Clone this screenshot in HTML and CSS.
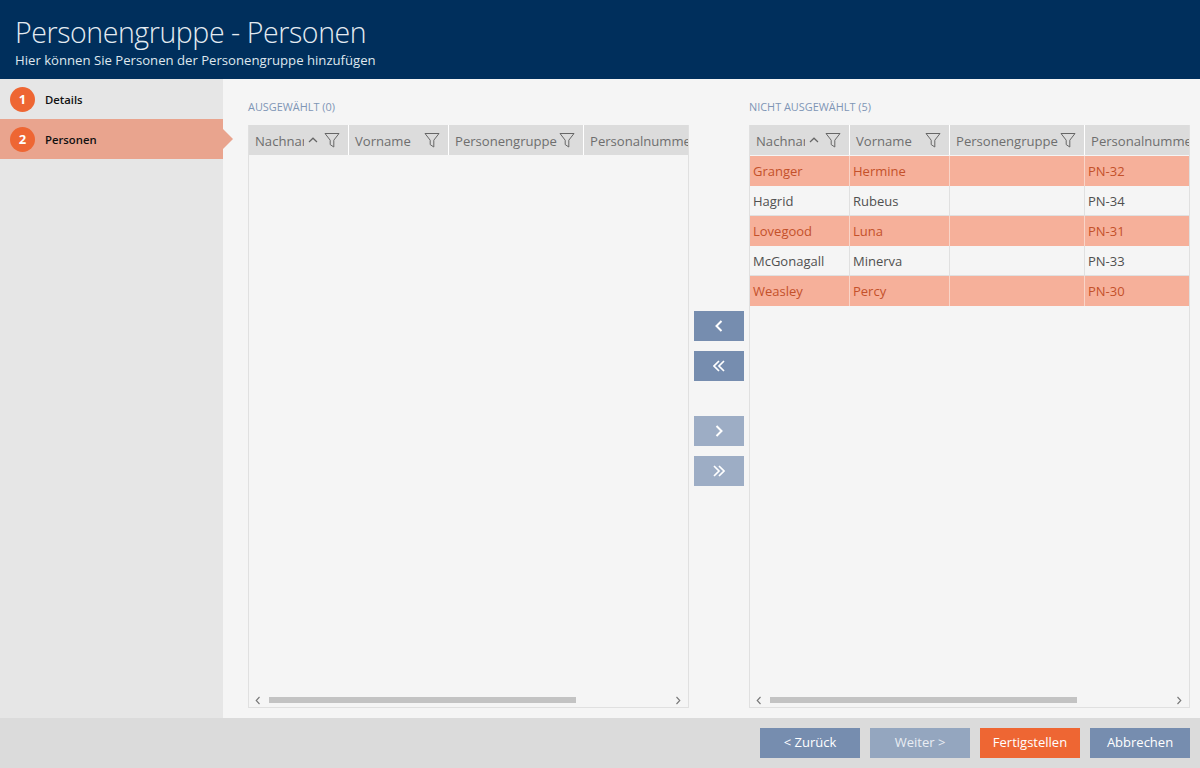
FILE: index.html
```html
<!DOCTYPE html>
<html lang="de">
<head>
<meta charset="utf-8">
<title>Personengruppe - Personen</title>
<link rel="stylesheet" href="styles.css">
</head>
<body>
<svg class="defs" width="0" height="0" aria-hidden="true">
  <symbol id="funnel" viewBox="0 0 16 16"><path d="M1 1.5h14L9.8 8.2V15L6.2 12.6V8.2Z" fill="none" stroke="currentColor" stroke-width="1"/></symbol>
  <symbol id="caret" viewBox="0 0 10 6"><path d="M1 5 5 1.2 9 5" fill="none" stroke="currentColor" stroke-width="1.2"/></symbol>
  <symbol id="left" viewBox="0 0 8 12"><path d="M6.5 1 1.5 6l5 5" fill="none" stroke="currentColor" stroke-width="2"/></symbol>
  <symbol id="right" viewBox="0 0 8 12"><path d="M1.5 1l5 5-5 5" fill="none" stroke="currentColor" stroke-width="2"/></symbol>
  <symbol id="dleft" viewBox="0 0 12 12"><path d="M6 1 1 6l5 5M11 1 6 6l5 5" fill="none" stroke="currentColor" stroke-width="1.7"/></symbol>
  <symbol id="dright" viewBox="0 0 12 12"><path d="M1 1l5 5-5 5M6 1l5 5-5 5" fill="none" stroke="currentColor" stroke-width="1.7"/></symbol>
  <symbol id="sl" viewBox="0 0 6 9"><path d="M4.5 1 1.2 4.5 4.5 8" fill="none" stroke="currentColor" stroke-width="1.1"/></symbol>
  <symbol id="sr" viewBox="0 0 6 9"><path d="M1.5 1l3.3 3.5L1.5 8" fill="none" stroke="currentColor" stroke-width="1.1"/></symbol>
</svg>
<div class="app">
  <header class="header">
    <h1 class="title">Personengruppe - Personen</h1>
    <p class="subtitle">Hier können Sie Personen der Personengruppe hinzufügen</p>
  </header>
  <div class="body">
    <nav class="sidebar">
      <div class="step"><span class="num">1</span><span class="step-label">Details</span></div>
      <div class="step active"><span class="num">2</span><span class="step-label">Personen</span></div>
    </nav>
    <main class="main">
      <section class="panel">
        <div class="panel-label">AUSGEWÄHLT (0)</div>
        <div class="table">
          <div class="thead">
            <div class="th c1"><span class="th-text narrow">Nachname</span><svg class="caret"><use href="#caret"/></svg><svg class="funnel"><use href="#funnel"/></svg></div>
            <div class="th c2"><span class="th-text">Vorname</span><svg class="funnel"><use href="#funnel"/></svg></div>
            <div class="th c3"><span class="th-text">Personengruppe</span><svg class="funnel"><use href="#funnel"/></svg></div>
            <div class="th c4"><span class="th-text">Personalnummer</span></div>
          </div>
          <div class="tbody"></div>
          <div class="scroll"><svg class="sc-arrow"><use href="#sl"/></svg><div class="track"><div class="thumb"></div></div><svg class="sc-arrow"><use href="#sr"/></svg></div>
        </div>
      </section>
      <div class="transfer">
        <button class="arrow"><svg class="ic1"><use href="#left"/></svg></button>
        <button class="arrow"><svg class="ic2"><use href="#dleft"/></svg></button>
        <button class="arrow dim sep"><svg class="ic1"><use href="#right"/></svg></button>
        <button class="arrow dim"><svg class="ic2"><use href="#dright"/></svg></button>
      </div>
      <section class="panel">
        <div class="panel-label">NICHT AUSGEWÄHLT (5)</div>
        <div class="table">
          <div class="thead">
            <div class="th c1"><span class="th-text narrow">Nachname</span><svg class="caret"><use href="#caret"/></svg><svg class="funnel"><use href="#funnel"/></svg></div>
            <div class="th c2"><span class="th-text">Vorname</span><svg class="funnel"><use href="#funnel"/></svg></div>
            <div class="th c3"><span class="th-text">Personengruppe</span><svg class="funnel"><use href="#funnel"/></svg></div>
            <div class="th c4"><span class="th-text">Personalnummer</span></div>
          </div>
          <div class="tbody">
            <div class="tr hot"><div class="td c1">Granger</div><div class="td c2">Hermine</div><div class="td c3"></div><div class="td c4">PN-32</div></div>
            <div class="tr"><div class="td c1">Hagrid</div><div class="td c2">Rubeus</div><div class="td c3"></div><div class="td c4">PN-34</div></div>
            <div class="tr hot"><div class="td c1">Lovegood</div><div class="td c2">Luna</div><div class="td c3"></div><div class="td c4">PN-31</div></div>
            <div class="tr"><div class="td c1">McGonagall</div><div class="td c2">Minerva</div><div class="td c3"></div><div class="td c4">PN-33</div></div>
            <div class="tr hot"><div class="td c1">Weasley</div><div class="td c2">Percy</div><div class="td c3"></div><div class="td c4">PN-30</div></div>
          </div>
          <div class="scroll"><svg class="sc-arrow"><use href="#sl"/></svg><div class="track"><div class="thumb"></div></div><svg class="sc-arrow"><use href="#sr"/></svg></div>
        </div>
      </section>
    </main>
  </div>
  <footer class="footer">
    <button class="btn">&lt; Zurück</button>
    <button class="btn dim">Weiter &gt;</button>
    <button class="btn primary">Fertigstellen</button>
    <button class="btn">Abbrechen</button>
  </footer>
</div>
</body>
</html>
```
FILE: styles.css
```css
* { box-sizing: border-box; }
html, body { margin: 0; padding: 0; }
body { font-family: "Open Sans", "Noto Sans", "Liberation Sans", sans-serif; font-size: 13px; color: #505050; }
.defs { display: block; height: 0; }
.app { width: 1200px; height: 768px; display: flex; flex-direction: column; overflow: hidden; background: #f5f5f5; }

.header { height: 79px; flex: none; background: #002f5c; color: #fff; padding: 13px 15px 0; }
.title { margin: 0; font-size: 28.5px; line-height: 38px; font-weight: 300; color: #e4ebf1; letter-spacing: -0.42px; }
.subtitle { margin: 0; font-size: 13.15px; line-height: 18px; color: #dfe7ee; }

.body { flex: 1; display: flex; min-height: 0; }
.sidebar { width: 223px; flex: none; background: #e6e6e6; }
.step { height: 40px; display: flex; align-items: center; padding-left: 10px; position: relative; }
.step.active { background: #e9a48e; }
.step.active::after { content: ""; position: absolute; left: 100%; top: 10px; border-left: 10px solid #e9a48e; border-top: 10px solid transparent; border-bottom: 10px solid transparent; }
.num { width: 25px; height: 25px; border-radius: 50%; background: #ee6633; color: #fff; font-weight: 700; font-size: 13px; display: flex; align-items: center; justify-content: center; }
.step-label { margin-left: 10px; font-size: 11.3px; font-weight: 600; color: #111; }

.main { flex: 1; display: flex; padding: 0 10px 10px 25px; min-width: 0; }
.panel { width: 441px; flex: none; display: flex; flex-direction: column; }
.panel-label { height: 46px; padding-top: 21px; font-size: 10.9px; line-height: 14px; color: #7f95b5; }
.table { flex: 1; border: 1px solid #e0e0e0; border-top: 0; display: flex; flex-direction: column; overflow: hidden; min-height: 0; }
.thead { height: 30px; flex: none; display: flex; background: #dcdcdc; margin: 0 -1px; padding-left: 1px; }
.th { height: 30px; display: flex; align-items: center; padding: 2px 0 0 6px; border-right: 1px solid #fff; color: #6e6e6e; font-size: 13.1px; position: relative; overflow: hidden; }
.th-text { white-space: nowrap; }
.th-text.narrow { width: 49px; overflow: hidden; }
.c1 { width: 100px; flex: none; }
.c2 { width: 100px; flex: none; }
.c3 { width: 135px; flex: none; }
.c4 { flex: 1; min-width: 0; border-right: 0; }
.caret { width: 10px; height: 6px; margin-left: 4px; margin-top: -3px; color: #666; }
.funnel { width: 16px; height: 16px; color: #666; position: absolute; right: 8px; top: 7px; }

.tbody { flex: 1; min-height: 0; padding-top: 1px; }
.tr { height: 30px; display: flex; border-bottom: 1px solid #e0e0e0; }
.tr.hot { background: #f6b09a; color: #c4512a; border-bottom-color: #f6b09a; }
.td { height: 30px; padding: 0 3px; line-height: 31px; font-size: 13px; border-right: 1px solid #e0e0e0; white-space: nowrap; overflow: hidden; }
.tr.hot .td { border-right-color: #f9d5c8; }
.td.c4 { border-right: 0; }

.scroll { height: 19px; flex: none; display: flex; align-items: flex-start; padding: 0 7px 0 6px; }
.sc-arrow { width: 6px; height: 9px; margin-top: 8px; flex: none; color: #777; }
.track { flex: 1; height: 6px; margin-top: 9px; padding-left: 8px; }
.thumb { width: 307px; height: 6px; background: #c3c3c3; }

.transfer { width: 60px; flex: none; display: flex; flex-direction: column; align-items: center; justify-content: center; gap: 10px; padding-top: 10px; }
.arrow { width: 50px; height: 30px; border: 0; padding: 0; background: #768daf; color: #fff; display: flex; align-items: center; justify-content: center; }
.arrow.dim { background: #9dadc5; }
.arrow.sep { margin-top: 25px; }
.ic1 { width: 8px; height: 12px; }
.ic2 { width: 12px; height: 12px; }

.footer { height: 50px; flex: none; background: #dbdbdb; display: flex; justify-content: flex-end; align-items: center; gap: 10px; padding-right: 10px; }
.btn { width: 100px; height: 30px; border: 0; padding: 0 0 2px; background: #768daf; color: #fff; font-family: inherit; font-size: 13px; }
.btn.dim { background: #94a6bf; color: #e9edf3; }
.btn.primary { background: #ee6633; }
```
